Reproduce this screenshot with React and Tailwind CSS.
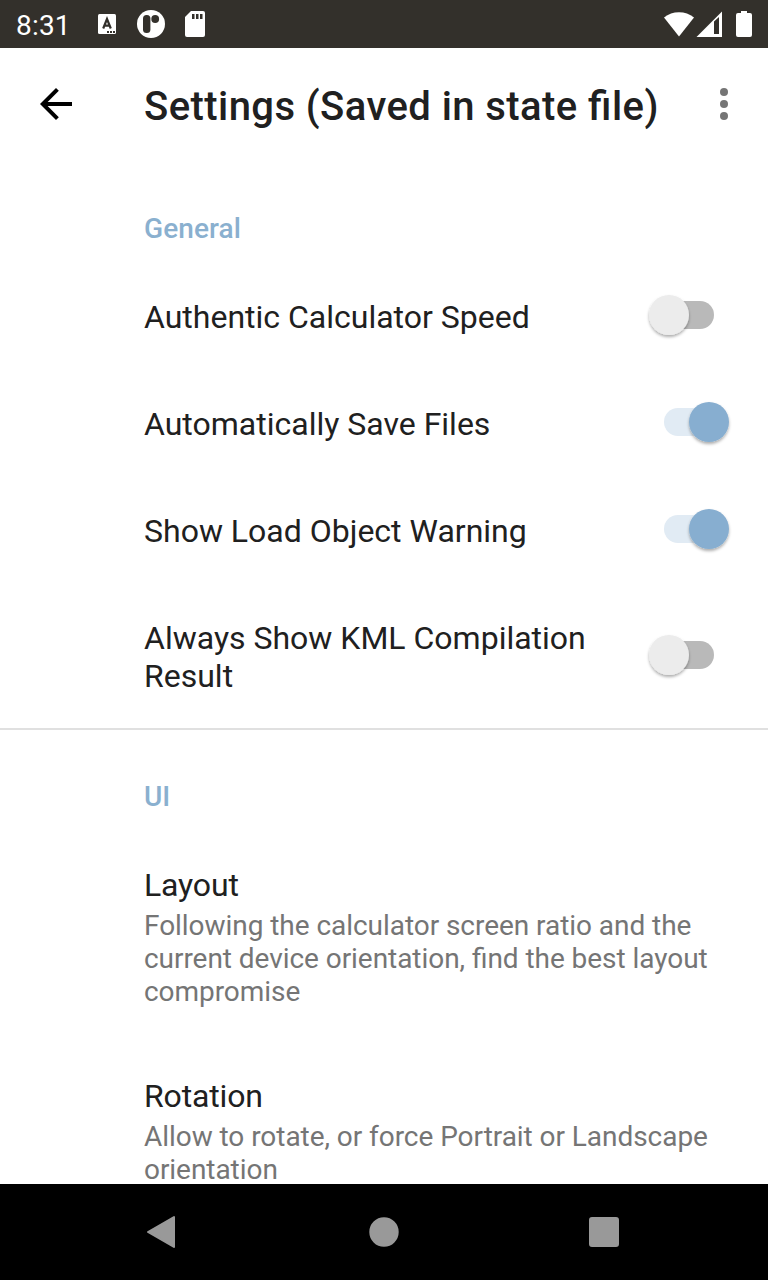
function Toggle({ on }) {
  return (
    <svg width="96" height="64" viewBox="0 0 96 64" className="block shrink-0 overflow-visible">
      <defs>
        <filter id="thumb-shadow" x="-30%" y="-30%" width="160%" height="170%">
          <feDropShadow dx="0" dy="2" stdDeviation="1.5" floodOpacity="0.32" />
        </filter>
      </defs>
      <rect x="32" y="18" width="50" height="28" rx="14" fill={on ? "#e1ebf4" : "#b9b9b9"} />
      <circle cx={on ? 77 : 37} cy="32" r="20" fill={on ? "#87aed0" : "#ececec"} filter="url(#thumb-shadow)" />
    </svg>
  );
}

function SwitchRow({ title, on, tall }) {
  return (
    <div className={`flex shrink-0 items-center pl-36 ${tall ? "h-[145px]" : "h-[107px]"}`}>
      <div className="w-[488px] shrink-0 pt-1 text-[32px] leading-[38px] text-[#202020]">{title}</div>
      <Toggle on={on} />
    </div>
  );
}

function Preference({ title, children }) {
  return (
    <div className="shrink-0 pl-36">
      <div className="text-[32px] leading-[38px] tracking-[-0.15px] text-[#202020]">{title}</div>
      <div className="mt-[5px] text-[28px] leading-[33px] tracking-[-0.05px] text-[#757575] [font-feature-settings:'liga'_1]">{children}</div>
    </div>
  );
}

function StatusBar() {
  return (
    <div className="flex h-12 shrink-0 items-center bg-[#33302b] text-white">
      <span className="w-[97px] pl-4 pt-[3px] text-[28px] leading-8 tracking-[0.2px]">8:31</span>
      <svg width="120" height="48" viewBox="97 0 120 48" fill="#fff">
        <rect x="98" y="14" width="18" height="20" rx="1.5" />
        <path d="M103.2 28.5l3.8-9.5 3.8 9.5M104.7 25.7h4.6" fill="none" stroke="#33302b" strokeWidth="2.2" />
        <path d="M107 31h2v2h-2zM110 31h2v2h-2zM113 31h2v2h-2z" fill="#33302b" />
        <circle cx="151" cy="24" r="14" />
        <rect x="143" y="15" width="7.4" height="18" rx="3.5" fill="#33302b" />
        <circle cx="155.2" cy="19" r="3.9" fill="#33302b" />
        <path d="M191 11h12a2 2 0 0 1 2 2v22a2 2 0 0 1-2 2h-16a2 2 0 0 1-2-2V17z" />
        <path d="M192 14h2.5v5H192zM196 14h2.5v5H196zM200 14h2.5v5H200z" fill="#33302b" />
      </svg>
      <svg width="104" height="48" viewBox="664 0 104 48" className="ml-auto" fill="#fff">
        <path d="M679 36.5L664 17.5a24 24 0 0 1 30 0z" />
        <path fillRule="evenodd" d="M696.5 37L722 11.5V37zM714 21.5V34h5V17z" />
        <path d="M741 11h6v2h3a2 2 0 0 1 2 2v20a2 2 0 0 1-2 2h-12a2 2 0 0 1-2-2V15a2 2 0 0 1 2-2h3z" />
      </svg>
    </div>
  );
}

export default function App() {
  return (
    <div className="flex h-[1280px] w-[768px] flex-col overflow-hidden bg-white font-[Roboto,sans-serif]">
      <StatusBar />
      <header className="flex h-28 shrink-0 items-center pl-8">
        <svg width="48" height="48" viewBox="0 0 24 24" fill="#000">
          <path d="M20 11H7.83l5.59-5.59L12 4l-8 8 8 8 1.41-1.41L7.83 13H20z" />
        </svg>
        <h1 className="ml-16 w-[556px] whitespace-nowrap pt-1.5 text-[40px] font-medium leading-[48px] tracking-[0.43px] text-[#202020] [font-feature-settings:'liga'_1]">Settings (Saved in state file)</h1>
        <svg width="48" height="48" viewBox="0 0 24 24" fill="#757575">
          <circle cx="12" cy="6" r="2" /><circle cx="12" cy="12" r="2" /><circle cx="12" cy="18" r="2" />
        </svg>
      </header>
      <main className="flex min-h-0 flex-1 flex-col overflow-hidden">
        <h2 className="h-[101px] shrink-0 pl-36 pt-[53px] text-[28px] font-medium leading-8 tracking-[0.1px] text-[#8ab0cf]">General</h2>
        <SwitchRow title="Authentic Calculator Speed" />
        <SwitchRow title="Automatically Save Files" on />
        <SwitchRow title="Show Load Object Warning" on />
        <SwitchRow title="Always Show KML Compilation Result" tall />
        <section className="mt-px flex shrink-0 flex-col border-t-2 border-[#e0e0e0] pt-[51px]">
          <h2 className="mb-[53px] pl-36 text-[28px] font-medium leading-8 text-[#8ab0cf]">UI</h2>
          <Preference title="Layout">Following the calculator screen ratio and the<br />current device orientation, find the best layout<br />compromise</Preference>
          <div className="h-[69px]" />
          <Preference title="Rotation">Allow to rotate, or force Portrait or Landscape<br />orientation</Preference>
        </section>
      </main>
      <nav className="h-24 shrink-0 bg-black">
        <svg width="768" height="96" viewBox="0 0 768 96" fill="#999" stroke="#999" strokeWidth="2" strokeLinejoin="round">
          <path d="M148 48l26-15v30z" /><circle cx="384" cy="48" r="13.7" /><rect x="590" y="34" width="28" height="28" rx="2" />
        </svg>
      </nav>
    </div>
  );
}
